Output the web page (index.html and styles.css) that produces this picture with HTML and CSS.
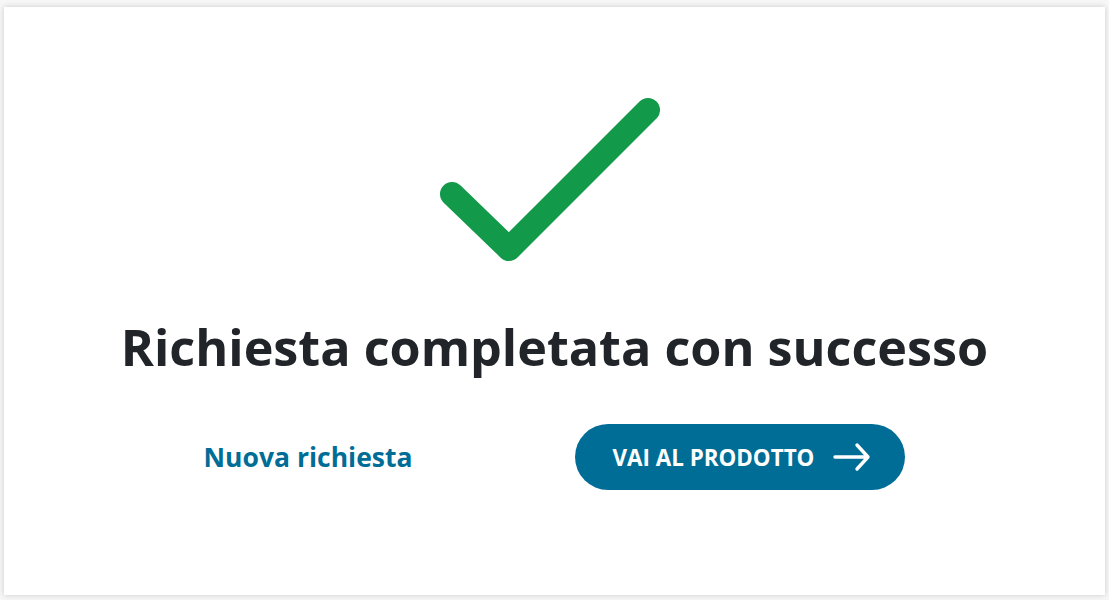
FILE: index.html
```html
<!DOCTYPE html>
<html lang="it">
<head>
    <meta charset="UTF-8">
    <meta name="viewport" content="width=device-width, initial-scale=1.0">
    <title>Richiesta completata</title>
    <link rel="stylesheet" href="styles.css">
</head>
<body>
    <div class="card">
        <svg class="check" width="240" height="180" viewBox="0 0 240 180">
            <polyline points="21,105 78,160 217,21" fill="none" stroke="#129a4a" stroke-width="24" stroke-linecap="round" stroke-linejoin="round"/>
        </svg>
        <h1>Richiesta completata con successo</h1>
        <div class="actions">
            <a class="link" href="#">Nuova richiesta</a>
            <a class="btn" href="#">
                VAI AL PRODOTTO
                <svg width="38" height="30" viewBox="0 0 38 30">
                    <path d="M2 15 H35 M24 3 L35 15 L24 27" fill="none" stroke="#fff" stroke-width="3.4" stroke-linecap="round" stroke-linejoin="round"/>
                </svg>
            </a>
        </div>
    </div>
</body>
</html>
```

FILE: styles.css
```css
body {
    margin: 0;
    padding: 7px 4px 5px 4px;
    font-family: "Open Sans", Arial, sans-serif;
    background: #f7f7f7;
}
.card {
    background: #fff;
    height: 588px;
    box-sizing: border-box;
    box-shadow: 0 0 6px rgba(0,0,0,0.18);
    display: flex;
    flex-direction: column;
    align-items: center;
    padding-top: 82px;
}
.check {
    display: block;
    margin-right: 8px;
}
h1 {
    margin: 46px 0 0 0;
    font-size: 50.3px;
    font-weight: 700;
    color: #212529;
    line-height: 64px;
}
.actions {
    display: flex;
    align-items: center;
    margin-top: 45px;
    gap: 163px;
}
.link {
    color: #006d96;
    font-size: 26.5px;
    font-weight: 700;
    text-decoration: none;
}
.btn {
    display: flex;
    align-items: center;
    gap: 19px;
    background: #006d96;
    color: #fff;
    text-decoration: none;
    font-size: 22.4px;
    font-weight: 700;
    height: 66px;
    padding: 0 34px 0 37px;
    border-radius: 33px;
    box-sizing: border-box;
}
```
